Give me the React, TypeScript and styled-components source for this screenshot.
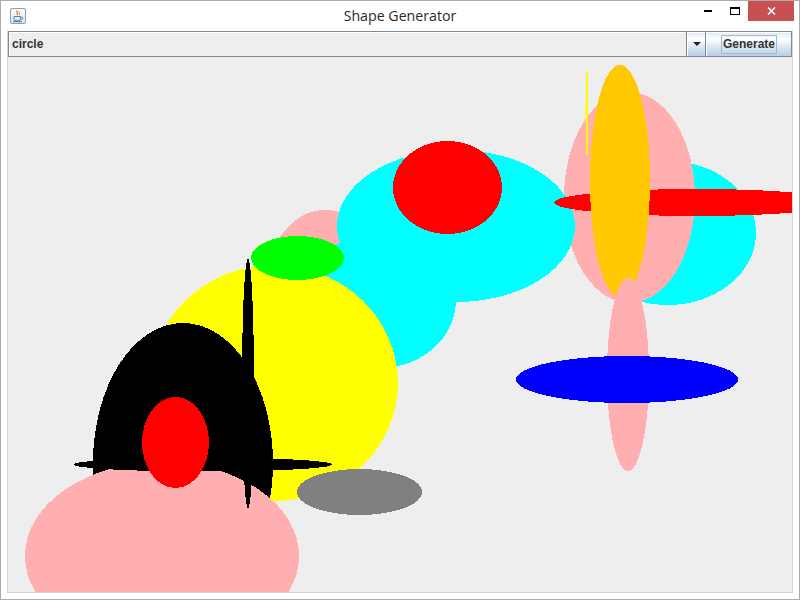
import React from "react";
import styled, { createGlobalStyle } from "styled-components";

const GlobalStyle = createGlobalStyle`
  html, body { margin: 0; padding: 0; background: #ffffff; }
  body { width: 800px; height: 600px; overflow: hidden; }
  * { box-sizing: border-box; }
`;

const Window = styled.div`
  width: 800px;
  height: 600px;
  border: 1px solid #ababab;
  background: #ffffff;
  display: flex;
  flex-direction: column;
`;

const TitleBar = styled.div`
  height: 30px;
  flex: none;
  display: grid;
  grid-template-columns: 1fr auto 1fr;
  align-items: center;
`;

const IconSlot = styled.div`
  padding-left: 9px;
  display: flex;
  align-items: center;
`;

const TitleText = styled.div`
  font-family: "Open Sans", "Noto Sans", sans-serif;
  font-size: 14.2px;
  color: #2b2b2b;
  padding-bottom: 1px;
`;

const Controls = styled.div`
  justify-self: end;
  align-self: start;
  display: flex;
  margin-right: 5px;
`;

const CaptionButton = styled.div<{ $w: number; $close?: boolean }>`
  width: ${(p) => p.$w}px;
  height: 20px;
  display: flex;
  align-items: center;
  justify-content: center;
  background: ${(p) => (p.$close ? "#c75050" : "transparent")};
`;

const Body = styled.div`
  flex: 1;
  padding: 0 6px 6px 6px;
  display: flex;
`;

const ContentPane = styled.div`
  flex: 1;
  border: 1px solid #d4d4d4;
  border-top: none;
  display: flex;
  flex-direction: column;
`;

const Toolbar = styled.div`
  height: 26px;
  flex: none;
  display: flex;
`;

const ComboField = styled.div`
  flex: 1;
  background: #eeeeee;
  border: 1px solid #7a8a99;
  border-right: none;
  box-shadow: inset 1px 1px 0 #ffffff;
  display: flex;
  align-items: center;
  padding-left: 3px;
  font-family: "Liberation Sans", Arial, sans-serif;
  font-weight: bold;
  font-size: 12px;
  color: #333333;
`;

const oceanGradient =
  "linear-gradient(to bottom, #dde8f3 0%, #ffffff 30%, #dde8f3 60%, #b8cfe5 100%)";

const ComboArrow = styled.div`
  width: 20px;
  border: 1px solid #7a8a99;
  background: ${oceanGradient};
  box-shadow: inset 1px 1px 0 #ffffff;
  display: flex;
  align-items: center;
  justify-content: center;
`;

const Arrow = styled.div`
  width: 0;
  height: 0;
  border-left: 4px solid transparent;
  border-right: 4px solid transparent;
  border-top: 4px solid #222222;
  margin-left: 1px;
`;

const Button = styled.div`
  width: 86px;
  border: 1px solid #7a8a99;
  border-left: none;
  background: ${oceanGradient};
  box-shadow: inset 1px 1px 0 #ffffff;
  display: flex;
  align-items: center;
  justify-content: center;
`;

const FocusLabel = styled.span`
  border: 1px solid #a3b8cc;
  padding: 2px 1px 2px 1px;
  font-family: "Liberation Sans", Arial, sans-serif;
  font-weight: bold;
  font-size: 12px;
  line-height: 13px;
  color: #333333;
  margin-left: 1px;
`;

const Canvas = styled.div`
  flex: 1;
  background: #eeeeee;
  overflow: hidden;
  display: flex;
`;

type Shape = { cx: number; cy: number; rx: number; ry: number; fill: string };

const shapes: Shape[] = [
  { cx: 317, cy: 233, rx: 60, ry: 80, fill: "#ffafaf" },
  { cx: 372, cy: 243, rx: 76, ry: 68, fill: "#00ffff" },
  { cx: 660, cy: 176, rx: 88, ry: 72, fill: "#00ffff" },
  { cx: 621.5, cy: 140.5, rx: 65.5, ry: 105.5, fill: "#ffafaf" },
  { cx: 448, cy: 169, rx: 119, ry: 76, fill: "#00ffff" },
  { cx: 439.5, cy: 130.5, rx: 54.5, ry: 46.5, fill: "#ff0000" },
  { cx: 689, cy: 145.5, rx: 143, ry: 13.5, fill: "#ff0000" },
  { cx: 612, cy: 124, rx: 30, ry: 116, fill: "#ffc800" },
  { cx: 579, cy: 56.5, rx: 1.5, ry: 44.5, fill: "#ffff00" },
  { cx: 620, cy: 317.5, rx: 21, ry: 96.5, fill: "#ffafaf" },
  { cx: 619, cy: 322.5, rx: 111, ry: 23.5, fill: "#0000ff" },
  { cx: 266, cy: 326, rx: 124, ry: 118, fill: "#ffff00" },
  { cx: 289.5, cy: 201, rx: 46.5, ry: 22, fill: "#00ff00" },
  { cx: 175, cy: 406, rx: 90, ry: 140, fill: "#000000" },
  { cx: 154, cy: 499, rx: 137, ry: 94, fill: "#ffafaf" },
  { cx: 240, cy: 326.5, rx: 6, ry: 125, fill: "#000000" },
  { cx: 195, cy: 407.5, rx: 129, ry: 7, fill: "#000000" },
  { cx: 167.5, cy: 385.5, rx: 33.5, ry: 45.5, fill: "#ff0000" },
  { cx: 351.5, cy: 435, rx: 62.5, ry: 23, fill: "#808080" },
];

const JavaIcon = () => (
  <svg width="16" height="16" viewBox="0 0 16 16">
    <defs>
      <linearGradient id="jframe" x1="0" y1="0" x2="0" y2="1">
        <stop offset="0" stopColor="#ffffff" />
        <stop offset="1" stopColor="#d6e2ef" />
      </linearGradient>
    </defs>
    <rect x="0.5" y="0.5" width="15" height="15" rx="1.5" fill="url(#jframe)" stroke="#8aa0b8" />
    <path d="M7.2 2.5c-1.6 1.3 1.4 2.3-0.2 4.3" fill="none" stroke="#e76f00" strokeWidth="1.2" />
    <path d="M9.4 3.8c-1 0.9 0.9 1.5-0.1 2.8" fill="none" stroke="#e76f00" strokeWidth="1" />
    <path d="M4 8.5h6.5v2.3a2 2 0 0 1-2 2H6a2 2 0 0 1-2-2z" fill="none" stroke="#5382a1" strokeWidth="1" />
    <path d="M10.5 9.3h1.2a1 1 0 0 1 0 2h-1.2" fill="none" stroke="#5382a1" strokeWidth="1" />
    <path d="M3 13.6h9" stroke="#5382a1" strokeWidth="1" />
  </svg>
);

export default function App() {
  return (
    <>
      <GlobalStyle />
      <Window>
        <TitleBar>
          <IconSlot>
            <JavaIcon />
          </IconSlot>
          <TitleText>Shape Generator</TitleText>
          <Controls>
            <CaptionButton $w={26}>
              <svg width="9" height="3" viewBox="0 0 9 3">
                <rect x="0" y="0" width="8" height="2" fill="#000" />
              </svg>
            </CaptionButton>
            <CaptionButton $w={27}>
              <svg width="10" height="8" viewBox="0 0 10 8">
                <rect x="0.5" y="0.5" width="9" height="7" fill="none" stroke="#000" />
                <rect x="0" y="0" width="10" height="2" fill="#000" />
              </svg>
            </CaptionButton>
            <CaptionButton $w={46} $close>
              <svg width="9" height="8" viewBox="0 0 9 8">
                <path d="M1 0.5L8 7.5M8 0.5L1 7.5" stroke="#fff" strokeWidth="1.6" />
              </svg>
            </CaptionButton>
          </Controls>
        </TitleBar>
        <Body>
          <ContentPane>
            <Toolbar>
              <ComboField>circle</ComboField>
              <ComboArrow>
                <Arrow />
              </ComboArrow>
              <Button>
                <FocusLabel>Generate</FocusLabel>
              </Button>
            </Toolbar>
            <Canvas>
              <svg width="784" height="535" viewBox="0 0 784 535" shapeRendering="crispEdges">
                {shapes.map((s, i) => (
                  <ellipse key={i} cx={s.cx} cy={s.cy} rx={s.rx} ry={s.ry} fill={s.fill} />
                ))}
              </svg>
            </Canvas>
          </ContentPane>
        </Body>
      </Window>
    </>
  );
}
